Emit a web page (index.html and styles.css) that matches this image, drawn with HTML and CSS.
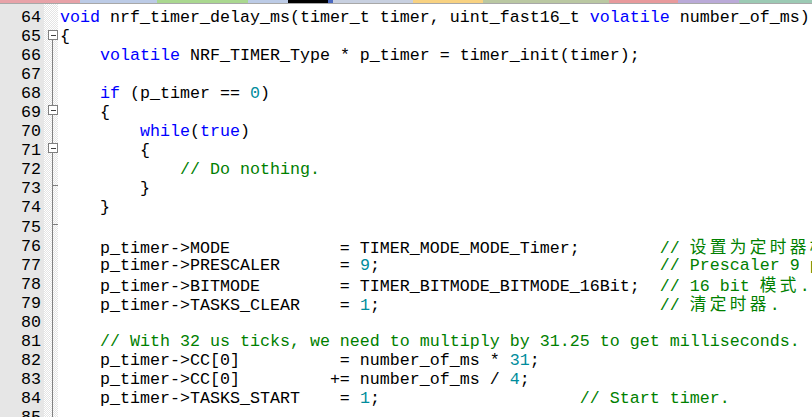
FILE: index.html
```html
<!DOCTYPE html>
<html>
<head>
<meta charset="utf-8">
<link rel="stylesheet" href="styles.css">
</head>
<body>
<div class="tabs">
  <span class="t t1"></span><span class="t t2"></span><span class="t t3"></span><span class="t t4"></span><span class="t t5"></span><span class="t t6"></span><span class="t t7"></span><span class="t t8"></span><span class="t t9"></span><span class="t t10"></span><span class="t t11"></span><span class="t t12"></span>
</div>
<div class="editor">
  <div class="nums">
    <div class="r">64</div><div class="r">65</div><div class="r">66</div><div class="r">67</div><div class="r">68</div><div class="r">69</div><div class="r">70</div><div class="r">71</div><div class="r">72</div><div class="r">73</div><div class="r">74</div><div class="r">75</div><div class="r">76</div><div class="r">77</div><div class="r">78</div><div class="r">79</div><div class="r">80</div><div class="r">81</div><div class="r">82</div><div class="r">83</div><div class="r">84</div><div class="r">85</div>
  </div>
  <div class="fold">
    <div class="f"></div>
    <div class="f start"><span class="box"></span></div>
    <div class="f line"></div>
    <div class="f line"></div>
    <div class="f line"></div>
    <div class="f line"><span class="box"></span></div>
    <div class="f line"></div>
    <div class="f line"><span class="box"></span></div>
    <div class="f line"></div>
    <div class="f line"><span class="tick"></span></div>
    <div class="f line"></div>
    <div class="f line"><span class="tick"></span></div>
    <div class="f line"></div>
    <div class="f line"></div>
    <div class="f line"></div>
    <div class="f line"></div>
    <div class="f line"></div>
    <div class="f line"></div>
    <div class="f line"></div>
    <div class="f line"></div>
    <div class="f line"></div>
    <div class="f line"></div>
  </div>
  <div class="code">
<div class="r"><span class="kw">void</span> nrf_timer_delay_ms(timer_t timer, uint_fast16_t <span class="kw">volatile</span> number_of_ms)</div>
<div class="r">{</div>
<div class="r">    <span class="kw">volatile</span> NRF_TIMER_Type * p_timer = timer_init(timer);</div>
<div class="r"> </div>
<div class="r">    <span class="kw">if</span> (p_timer == <span class="nm">0</span>)</div>
<div class="r">    {</div>
<div class="r">        <span class="kw">while</span>(<span class="kw">true</span>)</div>
<div class="r">        {</div>
<div class="r">            <span class="cm">// Do nothing.</span></div>
<div class="r">        }</div>
<div class="r">    }</div>
<div class="r"> </div>
<div class="r">    p_timer-&gt;MODE           = TIMER_MODE_MODE_Timer;        <span class="cm">// <span class="cjk">设置为定时器模式</span>.</span></div>
<div class="r">    p_timer-&gt;PRESCALER      = <span class="nm">9</span>;                            <span class="cm">// Prescaler 9 produces 31250 Hz timer frequency =&gt; 1 tick = 32 us.</span></div>
<div class="r">    p_timer-&gt;BITMODE        = TIMER_BITMODE_BITMODE_16Bit;  <span class="cm">// 16 bit <span class="cjk">模式</span>.</span></div>
<div class="r">    p_timer-&gt;TASKS_CLEAR    = <span class="nm">1</span>;                            <span class="cm">// <span class="cjk">清定时器</span>.</span></div>
<div class="r"> </div>
<div class="r">    <span class="cm">// With 32 us ticks, we need to multiply by 31.25 to get milliseconds.</span></div>
<div class="r">    p_timer-&gt;CC[0]          = number_of_ms * <span class="nm">31</span>;</div>
<div class="r">    p_timer-&gt;CC[0]         += number_of_ms / <span class="nm">4</span>;</div>
<div class="r">    p_timer-&gt;TASKS_START    = <span class="nm">1</span>;                    <span class="cm">// Start timer.</span></div>
<div class="r"> </div>
  </div>
</div>
</body>
</html>
```

FILE: styles.css
```css
html, body {
  margin: 0;
  padding: 0;
  height: 100%;
  overflow: hidden;
  background: #ffffff;
}

.tabs {
  display: flex;
  height: 3px;
  border-bottom: 1px solid #a8a8a8;
}
.t { display: block; height: 3px; }
.t1 { width: 80px; background: #e8a2a8; }
.t2 { width: 77px; background: #bccbe6; }
.t3 { width: 91px; background: #aad890; }
.t4 { width: 40px; background: #bccbe6; }
.t5 { width: 40px; background: #000000; }
.t6 { width: 5px; background: #4a68c0; }
.t7 { width: 80px; background: #c8d0e0; }
.t8 { width: 70px; background: #f8d282; }
.t9 { width: 126px; background: #bac8a2; }
.t10 { width: 69px; background: #e89a9c; }
.t11 { width: 61px; background: #baaad8; }
.t12 { flex: 1; background: #9ccab4; }

.editor {
  display: flex;
  height: calc(100% - 4px);
  font-family: "Liberation Mono", "Noto Sans CJK SC", monospace;
  font-size: 16.67px;
  color: #000000;
}

.r {
  height: 19.05px;
  line-height: 19.05px;
  white-space: pre;
}

.nums {
  width: 44px;
  flex: none;
  box-sizing: border-box;
  padding: 4px 3px 0 0;
  background: #e6e6e6;
  text-align: right;
  color: #000000;
}

.fold {
  width: 14px;
  flex: none;
  padding-top: 4px;
  background: conic-gradient(#e4e4e4 25%, #ffffff 0 50%, #e4e4e4 0 75%, #ffffff 0) 0 0 / 2px 2px;
}

.f {
  position: relative;
  height: 19.05px;
}
.f.line::before,
.f.start::before {
  content: "";
  position: absolute;
  left: 8px;
  width: 1px;
  top: 0;
  bottom: 0;
  background: #808080;
}
.f.start::before { top: 8px; }

.box {
  position: absolute;
  left: 4px;
  top: 2px;
  width: 8px;
  height: 8px;
  border: 1px solid #808080;
  background: #ffffff;
}
.box::after {
  content: "";
  position: absolute;
  left: 2px;
  top: 4px;
  width: 5px;
  height: 1px;
  background: #404040;
}
.f.start .box { top: 3px; }

.tick {
  position: absolute;
  left: 8px;
  top: 6px;
  width: 6px;
  height: 1px;
  background: #808080;
}

.code {
  flex: 1;
  min-width: 0;
  overflow: hidden;
  padding: 4px 0 0 2px;
}

.kw { color: #0000ff; }
.nm { color: #008c9c; }
.cm { color: #008000; }
.cjk {
  letter-spacing: 3.33px;
  font-family: "Noto Sans CJK SC", sans-serif;
}
```
